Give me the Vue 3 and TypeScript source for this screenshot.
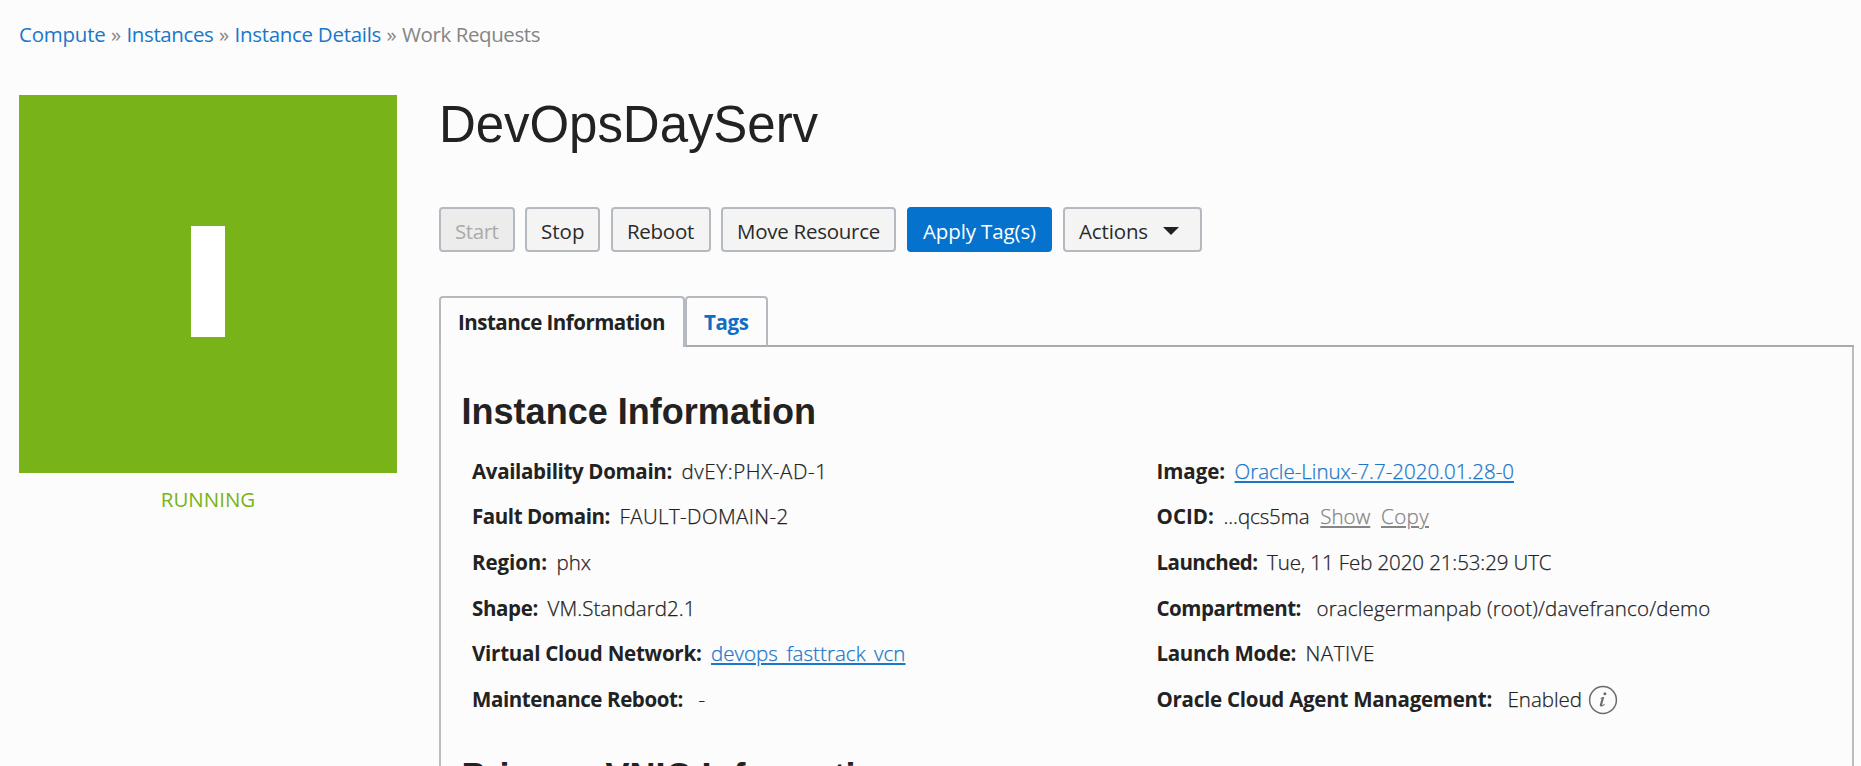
<script setup lang="ts">
import type { Directive } from 'vue'

interface Crumb { text: string; width: number; link: boolean }
interface ActionButton { text: string; width: number; kind: string; box: string; menu?: boolean }
interface Part { text: string; width: number; kind: string }
interface Field { label: string; width: number; parts: Part[]; wide?: boolean; info?: boolean }

// Adjusts letter spacing so a text run takes up the given advance width.
const vTrack: Directive<HTMLElement, number> = {
  mounted(el, binding) {
    const length = (el.textContent ?? '').trim().length
    const delta = binding.value - el.getBoundingClientRect().width
    el.style.letterSpacing = `${delta / length}px`
  },
}

const crumbs: Crumb[] = [
  { text: 'Compute', width: 86.5, link: true },
  { text: 'Instances', width: 87, link: true },
  { text: 'Instance Details', width: 146.5, link: true },
  { text: 'Work Requests', width: 138, link: false },
]

const buttons: ActionButton[] = [
  { text: 'Start', width: 43.5, kind: 'disabled', box: 'w-start' },
  { text: 'Stop', width: 43.5, kind: 'plain', box: 'w-stop' },
  { text: 'Reboot', width: 67, kind: 'plain', box: 'w-reboot' },
  { text: 'Move Resource', width: 143, kind: 'plain', box: 'w-move' },
  { text: 'Apply Tag(s)', width: 113, kind: 'primary', box: 'w-apply' },
  { text: 'Actions', width: 69, kind: 'plain', box: 'w-actions', menu: true },
]

const left: Field[] = [
  { label: 'Availability Domain:', width: 200, parts: [{ text: 'dvEY:PHX-AD-1', width: 146, kind: 'value' }] },
  { label: 'Fault Domain:', width: 138, parts: [{ text: 'FAULT-DOMAIN-2', width: 169, kind: 'value' }] },
  { label: 'Region:', width: 75, parts: [{ text: 'phx', width: 34.5, kind: 'value' }] },
  { label: 'Shape:', width: 66, parts: [{ text: 'VM.Standard2.1', width: 148, kind: 'value' }] },
  { label: 'Virtual Cloud Network:', width: 229.5, parts: [{ text: 'devops_fasttrack_vcn', width: 194.5, kind: 'link' }] },
  { label: 'Maintenance Reboot:', width: 211, wide: true, parts: [{ text: '-', width: 8, kind: 'value' }] },
]

const right: Field[] = [
  { label: 'Image:', width: 68.5, parts: [{ text: 'Oracle-Linux-7.7-2020.01.28-0', width: 279.5, kind: 'link' }] },
  {
    label: 'OCID:',
    width: 57.5,
    parts: [
      { text: '...qcs5ma', width: 86, kind: 'value' },
      { text: 'Show', width: 50, kind: 'muted' },
      { text: 'Copy', width: 48, kind: 'muted' },
    ],
  },
  { label: 'Launched:', width: 101, parts: [{ text: 'Tue, 11 Feb 2020 21:53:29 UTC', width: 284.5, kind: 'value' }] },
  { label: 'Compartment:', width: 144.5, wide: true, parts: [{ text: 'oraclegermanpab (root)/davefranco/demo', width: 394, kind: 'value' }] },
  { label: 'Launch Mode:', width: 139.5, parts: [{ text: 'NATIVE', width: 69.5, kind: 'value' }] },
  { label: 'Oracle Cloud Agent Management:', width: 335.5, wide: true, info: true, parts: [{ text: 'Enabled', width: 74.5, kind: 'value' }] },
]

const columns: Field[][] = [left, right]
</script>

<template>
  <div class="page">
    <nav class="crumbs">
      <template v-for="(c, i) in crumbs" :key="c.text">
        <span v-if="i > 0" class="sep">»</span>
        <component :is="c.link ? 'a' : 'span'" v-track="c.width" class="crumb" :class="{ link: c.link }">{{ c.text }}</component>
      </template>
    </nav>

    <div class="layout">
      <aside class="status">
        <div class="tile"><div class="bar"></div></div>
        <div class="state"><span v-track="94.5">RUNNING</span></div>
      </aside>

      <main class="main">
        <h1 class="title"><span v-track="379">DevOpsDayServ</span></h1>

        <div class="buttons">
          <button v-for="b in buttons" :key="b.text" type="button" class="btn" :class="[b.kind, b.box]" :disabled="b.kind === 'disabled'">
            <span v-track="b.width">{{ b.text }}</span>
            <svg v-if="b.menu" class="caret" viewBox="0 0 16 8" width="16" height="8"><path d="M0 0h16L8 8z" fill="#222" /></svg>
          </button>
        </div>

        <div class="tabs">
          <div class="tab active"><span v-track="207">Instance Information</span></div>
          <div class="tab other"><span v-track="44.5">Tags</span></div>
          <div class="rest"></div>
        </div>

        <section class="panel">
          <h2 class="heading"><span v-track="354.5">Instance Information</span></h2>
          <div class="columns">
            <div v-for="(col, i) in columns" :key="i" class="column">
              <div v-for="f in col" :key="f.label" class="field" :class="{ wide: f.wide }">
                <span v-track="f.width" class="label">{{ f.label }}</span>
                <div class="parts">
                  <span v-for="p in f.parts" :key="p.text" v-track="p.width" :class="p.kind">{{ p.text }}</span>
                </div>
                <svg v-if="f.info" class="info" viewBox="0 0 30 30" width="30" height="30">
                  <circle cx="15" cy="15" r="13.4" fill="none" stroke="#6b6b6b" stroke-width="1.5" />
                  <circle cx="16.9" cy="8.8" r="1.5" fill="#6b6b6b" />
                  <path d="M12.3 13.4c1.2-.9 2.5-1.3 4-1.3l-2.1 7.2c-.2.9.1 1 .6.7l1.6-1.2.4.6c-1.3 1.5-2.6 2-3.7 2-1.1 0-1.5-.7-1.2-1.9l1.6-5.5c.1-.5-.1-.6-.9-.1z" fill="#6b6b6b" />
                </svg>
              </div>
            </div>
          </div>
          <h2 class="heading second">Primary VNIC Information</h2>
        </section>
      </main>
    </div>
  </div>
</template>

<style>
body {
  margin: 0;
  background: #fcfcfc;
  overflow: hidden;
}
</style>

<style scoped>
.page {
  box-sizing: border-box;
  width: 1861px;
  height: 766px;
  overflow: hidden;
  padding: 20px 7px 0 19px;
  background: #fcfcfc;
  color: #222;
  font-family: "Open Sans", "Noto Sans", sans-serif;
  font-size: 20.5px;
  font-weight: 400;
  line-height: 28px;
  white-space: nowrap;
}
.page span,
.page a {
  display: inline-block;
}
.crumbs {
  display: flex;
  height: 28px;
  color: #858585;
}
.crumbs .sep {
  width: 21px;
  text-align: center;
}
.crumb.link {
  color: #1a77ca;
}
.layout {
  display: flex;
  gap: 42px;
  padding-top: 47px;
}
.status {
  flex: none;
  width: 378px;
}
.tile {
  display: flex;
  justify-content: center;
  align-items: center;
  height: 378px;
  background: #78b417;
}
.bar {
  width: 34px;
  height: 111px;
  margin: 0 0 5px 0;
  background: #fff;
}
.state {
  padding-top: 12px;
  text-align: center;
  color: #78b417;
}
.main {
  flex: 1;
  min-width: 0;
}
.title {
  margin: 0;
  height: 112px;
  font: 400 51px/60px "Liberation Sans", Arial, sans-serif;
}
.buttons {
  display: flex;
  height: 45px;
}
.btn {
  display: flex;
  align-items: center;
  box-sizing: border-box;
  height: 45px;
  margin: 0;
  padding: 2px 0 0 14px;
  border: 2px solid #b5bac1;
  border-radius: 4px;
  background: #f4f4f4;
  color: #2a2a2a;
  font: inherit;
}
.btn.disabled {
  background: #ececec;
  color: #aaa;
}
.btn.primary {
  border-color: #0572ce;
  background: #0572ce;
  color: #fff;
}
.w-start { width: 76px; margin-right: 10px; }
.w-stop { width: 75px; margin-right: 11px; }
.w-reboot { width: 100px; margin-right: 10px; }
.w-move { width: 175px; margin-right: 11px; }
.w-apply { width: 145px; margin-right: 11px; }
.w-actions { width: 139px; }
.caret {
  margin-left: 15px;
}
.tabs {
  display: flex;
  height: 51px;
  margin-top: 44px;
}
.tab {
  box-sizing: border-box;
  padding: 10px 0 0 17px;
  border: 2px solid #b5bac1;
  border-radius: 4px 4px 0 0;
  font-weight: 700;
}
.tab.active {
  width: 246px;
  border-bottom: 0;
}
.tab.other {
  width: 83px;
  border-bottom-color: #aaa;
  color: #0f6fc5;
}
.rest {
  flex: 1;
  border-bottom: 2px solid #aaa;
}
.panel {
  box-sizing: border-box;
  height: 440px;
  padding: 43px 0 0 20.5px;
  border: 2px solid #b9bcc0;
  border-top: 0;
}
.heading {
  margin: 0;
  font: 700 36px/44px "Liberation Sans", Arial, sans-serif;
}
.columns {
  display: grid;
  grid-template-columns: 684.5px 1fr;
  margin: 14px 0 0 10.5px;
}
.field {
  display: flex;
  align-items: center;
  gap: 9.5px;
  height: 45.6px;
}
.field.wide {
  gap: 15.5px;
}
.label {
  font-weight: 700;
}
.parts {
  display: flex;
  gap: 10.75px;
  font-weight: 300;
  -webkit-text-stroke: 0.25px currentColor;
}
.link,
.muted {
  color: #1a77ca;
}
.parts .link,
.parts .muted {
  text-decoration: underline;
  text-decoration-thickness: 2px;
  text-underline-offset: 2px;
}
.parts .muted {
  color: #858585;
}
.info {
  margin: 3px 0 0 -9.5px;
}
.second {
  margin-top: 33px;
}
</style>
